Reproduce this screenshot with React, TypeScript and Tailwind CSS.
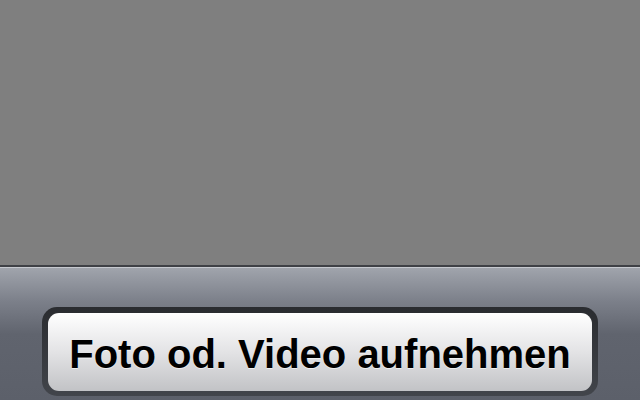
import React from "react";

export default function App() {
  return (
    <div className="w-[640px] h-[400px] flex flex-col overflow-hidden" style={{ fontFamily: '"Liberation Sans", Arial, sans-serif' }}>
      <div className="h-[265px] bg-[#7f7f7f] shrink-0" />
      <div className="h-[2px] bg-[#3e4045] shrink-0" />
      <div className="h-[1px] bg-[#c6c9cf] shrink-0" />
      <div className="flex-1 bg-[linear-gradient(to_bottom,#a0a4ac_0%,#7c808a_25%,#60646e_50%,#5c606a_100%)] px-[42px] pt-[39px]">
        <div className="h-[89px] rounded-[15px] bg-gradient-to-b from-[#2a2c30] to-[#42454b] p-[6px] pb-[5px]">
          <div className="h-full rounded-[11px] bg-gradient-to-b from-[#ffffff] via-[#e3e3e5] to-[#c2c3c6] flex items-center justify-center">
            <span className="text-[40px] font-bold text-black leading-none pt-[3px] [text-shadow:0_1px_0_rgba(255,255,255,0.6)]">
              Foto od. Video aufnehmen
            </span>
          </div>
        </div>
      </div>
    </div>
  );
}
